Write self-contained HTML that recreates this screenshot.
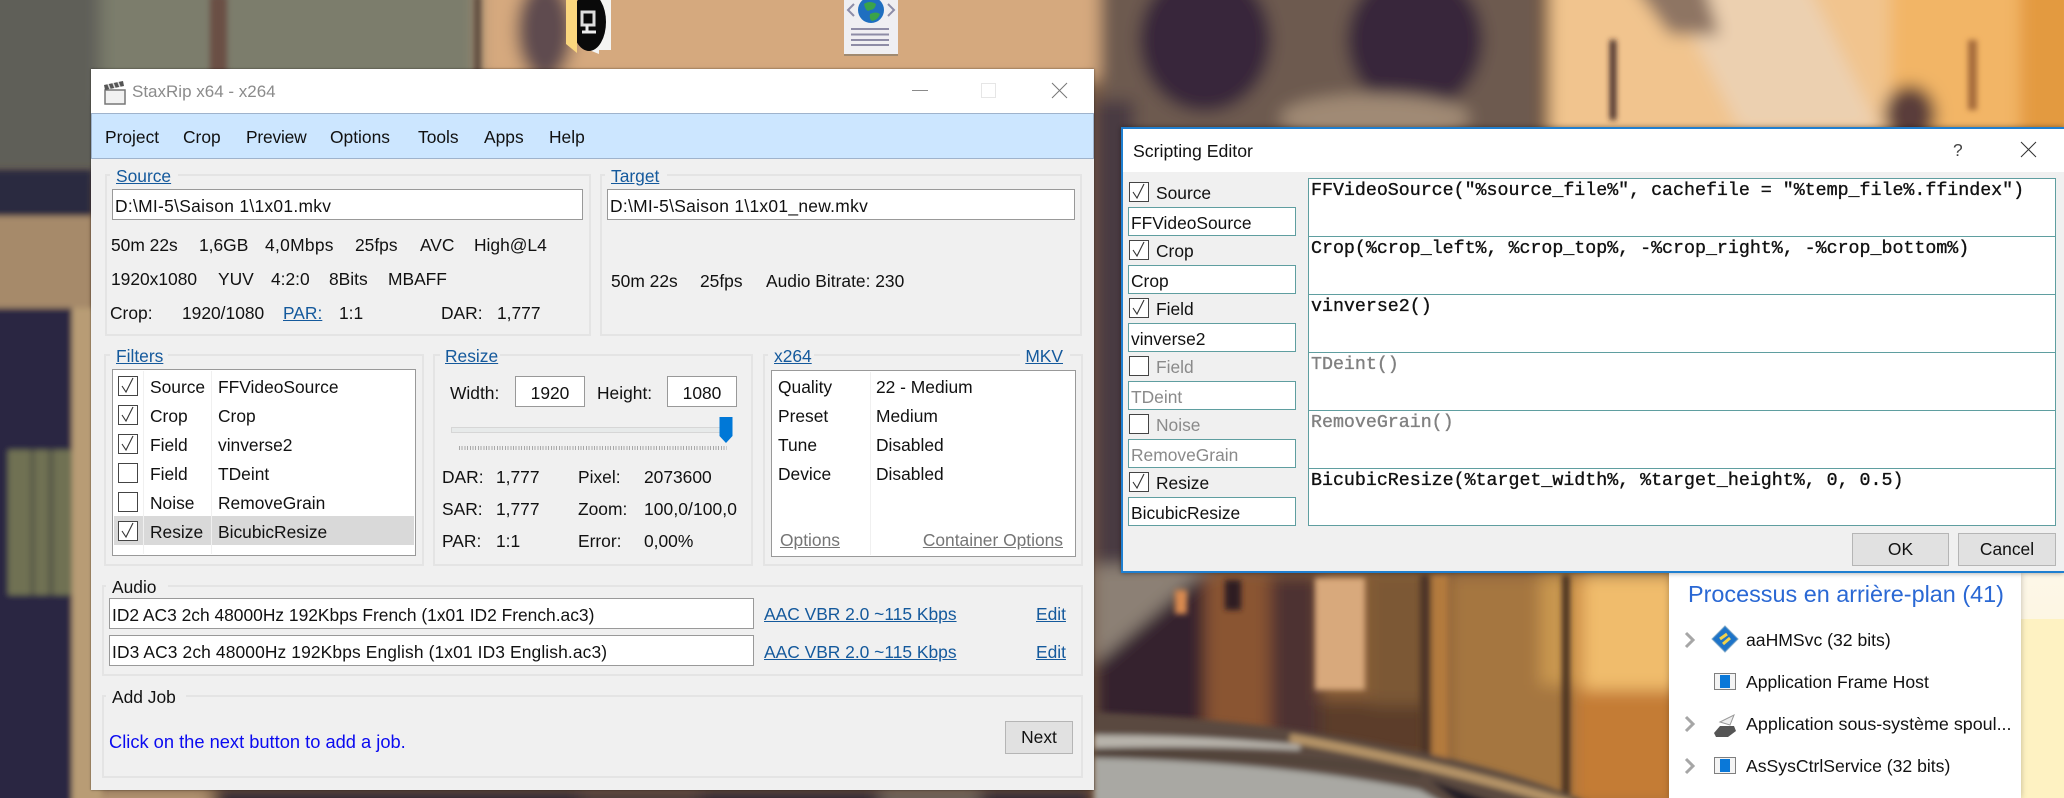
<!DOCTYPE html>
<html><head><meta charset="utf-8"><title>StaxRip</title>
<style>
html,body{margin:0;padding:0;width:2064px;height:798px;overflow:hidden;background:#7a5a40}
body{position:relative;font-family:"Liberation Sans",sans-serif;color:#111}
.a{position:absolute;box-sizing:border-box}
.t{position:absolute;white-space:nowrap;font-size:17.4px;line-height:20px;height:20px}
.s{letter-spacing:.3px}
.l{color:#14599c;text-decoration:underline}
.g{color:#757575;text-decoration:underline}
.d{color:#8a8a8a}
.i{position:absolute;box-sizing:border-box;background:#fff;border:1.5px solid #999}
.grp{position:absolute;box-sizing:border-box;border:2px solid #e4e4e4}
.leg{position:absolute;height:20px;background:#f0f0f0}
.cb{position:absolute;box-sizing:border-box;width:20px;height:20px;border:1.5px solid #444;background:#fff}
.cb svg{position:absolute;left:1px;top:0}
.e{position:absolute;box-sizing:border-box;left:1308px;width:748px;height:59.5px;background:#fff;border:1.5px solid #5f9ea0}
.m{position:absolute;white-space:nowrap;font-family:"Liberation Mono",monospace;font-size:18.3px;line-height:20px;-webkit-text-stroke:.35px currentColor}
.n{position:absolute;box-sizing:border-box;left:1128px;width:168px;height:29px;background:#fff;border:1.5px solid #5f9ea0}
.b{position:absolute;box-sizing:border-box;background:#e1e1e1;border:1.5px solid #b5b5b5;text-align:center;font-size:17.4px;line-height:31px}
</style></head><body>

<svg class="a" style="left:0;top:0" width="2064" height="798" viewBox="0 0 2064 798">
<defs>
<filter id="b1" x="-10%" y="-10%" width="120%" height="120%"><feGaussianBlur stdDeviation="8"/></filter>
<filter id="b2" x="-10%" y="-10%" width="120%" height="120%"><feGaussianBlur stdDeviation="3"/></filter>
</defs>
<g filter="url(#b1)">
<rect x="-30" y="-30" width="2124" height="860" fill="#7a5a40"/>
<rect x="-30" y="-30" width="140" height="205" fill="#5f5f59"/>
<rect x="100" y="-30" width="380" height="130" fill="#7c7d6c"/>
<rect x="480" y="-30" width="660" height="110" fill="#d5a97e"/>
<ellipse cx="545" cy="30" rx="28" ry="50" fill="#5e4c50"/>
<rect x="1100" y="-30" width="440" height="170" fill="#6d5a50"/>
<rect x="1094" y="100" width="40" height="480" fill="#4a3a42"/>
<ellipse cx="1205" cy="40" rx="66" ry="72" fill="#37263a"/>
<ellipse cx="1415" cy="40" rx="68" ry="72" fill="#37263a"/>
<ellipse cx="1375" cy="118" rx="95" ry="24" fill="#a08a74"/>
<rect x="1550" y="-30" width="540" height="170" fill="#f1c48e"/>
<polygon points="1660,-30 1800,-30 1880,130 1740,130" fill="#ecd0b0"/>
<polygon points="1622,-30 1700,-30 1720,35 1670,35" fill="#8e7464"/>
<rect x="1890" y="-30" width="180" height="170" fill="#f2b566"/>
<rect x="2020" y="-30" width="60" height="170" fill="#e39a40"/>
<ellipse cx="1910" cy="115" rx="26" ry="30" fill="#5a3c3a"/>
<rect x="1094" y="570" width="700" height="250" fill="#8a5f38"/>
<polygon points="1094,565 1215,565 1094,665" fill="#8c8074"/>
<polygon points="1094,665 1200,575 1240,575 1240,730 1094,730" fill="#36222e"/>
<rect x="1205" y="575" width="65" height="160" fill="#8a5530"/>
<rect x="1270" y="575" width="50" height="180" fill="#4e3230"/>
<rect x="1320" y="700" width="110" height="60" fill="#5c3d2c"/>
<rect x="1370" y="575" width="65" height="130" fill="#7b5836"/>
<rect x="1450" y="575" width="125" height="230" fill="#a5763f"/>
<rect x="1540" y="575" width="35" height="110" fill="#c9974f"/>
<rect x="1575" y="575" width="110" height="230" fill="#c47c36"/>
<rect x="1582" y="575" width="100" height="115" fill="#f0bc6c"/>
<rect x="91" y="790" width="120" height="30" fill="#b69874"/>
<rect x="215" y="788" width="880" height="30" fill="#2a2636"/>
<rect x="580" y="788" width="120" height="30" fill="#4a3a3a"/>
<rect x="880" y="788" width="100" height="30" fill="#6a6058"/>
</g>
<g filter="url(#b2)">
<rect x="-20" y="170" width="112" height="46" fill="#2a2a40"/>
<rect x="-20" y="216" width="112" height="92" fill="#a68a6b"/>
<rect x="-20" y="308" width="92" height="510" fill="#2a2843"/>
<rect x="72" y="308" width="30" height="510" fill="#b89c75"/>
<rect x="8" y="450" width="64" height="145" fill="#6f7152"/>
<rect x="30" y="450" width="5" height="145" fill="#5a5c48"/>
<rect x="48" y="450" width="6" height="145" fill="#5a5c48"/>
<rect x="210" y="-5" width="17" height="80" fill="#6a5044"/>
<rect x="474" y="-5" width="7" height="80" fill="#5c4a3c"/>
<rect x="1315" y="578" width="50" height="112" fill="#d8a97c"/>
<rect x="1432" y="575" width="16" height="190" fill="#b37a3c"/>
<rect x="1420" y="575" width="10" height="180" fill="#4d3428"/>
<rect x="1562" y="575" width="8" height="220" fill="#4a3024"/>
<rect x="1610" y="40" width="6" height="80" fill="#3a2420"/>
<rect x="1968" y="40" width="9" height="70" fill="#a56a3a"/>
<rect x="1175" y="590" width="12" height="24" fill="#d98a50"/>
<rect x="1225" y="580" width="16" height="30" fill="#2e1e24"/>
<path d="M1094 712 Q1280 722 1400 748 Q1520 772 1590 804 L1094 804Z" fill="#5a4a40"/>
<path d="M1094 735 Q1200 735 1300 745 L1300 750 Q1200 745 1094 748Z" fill="#b8b4ac"/>
<path d="M1290 738 Q1440 765 1570 804" fill="none" stroke="#b69468" stroke-width="9"/>
<path d="M1094 758 Q1280 762 1420 790 L1445 804 L1094 804Z" fill="#a9a8a3"/>
<path d="M1094 752 Q1300 755 1420 775" fill="none" stroke="#4d4038" stroke-width="5"/>
<path d="M1430 780 L1500 804 L1460 804Z" fill="#221c28"/>
</g>
</svg>

<!-- desktop icons -->
<svg class="a" style="left:560px;top:0" width="60" height="60" viewBox="0 0 60 60">
<polygon points="24,0 51,0 51,50 39,50 39,54 24,48" fill="#f4f4f2"/>
<ellipse cx="29" cy="22" rx="17" ry="29" fill="#0a0a0a"/>
<polygon points="6,0 17,0 17,53 6,44" fill="#fbd77e"/>
<rect x="22" y="12" width="12" height="13" fill="none" stroke="#ddd" stroke-width="3"/>
<path d="M22 32h14M27 25v8" stroke="#eee" stroke-width="3" fill="none"/>
</svg>
<svg class="a" style="left:844px;top:0" width="56" height="58" viewBox="0 0 56 58">
<rect x="0" y="0" width="54" height="55" fill="#efeff2"/>
<rect x="0" y="54" width="54" height="2" fill="#a08a70"/>
<circle cx="27" cy="10" r="13" fill="#1f6fc0"/>
<path d="M20 4q6-4 12 0q-1 6-6 6q-4 3-6-6zM26 14q6-3 10 0q-2 6-8 7q-3-2-2-7z" fill="#3aa34a"/>
<path d="M10 4l-6 6 6 6M44 4l6 6-6 6" fill="none" stroke="#8d8da8" stroke-width="2"/>
<path d="M7 29h38M7 34.500h38M7 40h38M7 45h38" stroke="#8d8ca6" stroke-width="2"/>
</svg>

<!-- task manager -->
<div class="a" style="left:2021px;top:573px;width:43px;height:225px;background:linear-gradient(#fdf7e8,#fdf6e3 46px,#fef2c2 46px,#fef2c2)"></div>
<div class="a" style="left:1669px;top:573px;width:352px;height:225px;background:#fff;box-shadow:0 0 6px rgba(0,0,0,.25)"></div>
<div class="t" style="left:1688px;top:582px;font-size:23.4px;line-height:24px;height:24px;color:#2a68d4">Processus en arrière-plan (41)</div>
<div class="t" style="left:1746px;top:630px;font-size:17.6px">aaHMSvc (32 bits)</div>
<div class="t" style="left:1746px;top:672px;font-size:17.6px">Application Frame Host</div>
<div class="t" style="left:1746px;top:714px;font-size:17.9px">Application sous-système spoul...</div>
<div class="t" style="left:1746px;top:756px;font-size:17.6px">AsSysCtrlService (32 bits)</div>
<svg class="a" style="left:1680px;top:625px" width="70" height="160" viewBox="0 0 70 160">
<path d="M6 8l7 7-7 7M6 92l7 7-7 7M6 134l7 7-7 7" fill="none" stroke="#a6a6a6" stroke-width="3"/>
<polygon points="45,1 58,14 45,27 32,14" fill="#1e74c8" stroke="#7aa6c8"/>
<path d="M40 14l7-5M43 19l7-6" stroke="#f2d24a" stroke-width="3"/>
<rect x="34.500" y="48.500" width="21" height="16" fill="#f4f4f4" stroke="#7f7f7f"/><rect x="40" y="50" width="10" height="13" fill="#0a78d8"/>
<rect x="34.500" y="132.500" width="21" height="16" fill="#f4f4f4" stroke="#7f7f7f"/><rect x="40" y="134" width="10" height="13" fill="#0a78d8"/>
<polygon points="40,97 54,90 50,100" fill="#eee" stroke="#999"/>
<path d="M34 108l6-7h14l2 5-8 6H36z" fill="#555"/>
</svg>

<!-- main window -->
<div class="a" style="left:91px;top:69px;width:1003px;height:721px;background:#f0f0f0;box-shadow:0 0 2px rgba(0,0,0,.55)"></div>
<div class="a" style="left:91px;top:69px;width:1003px;height:44px;background:#fff"></div>
<svg class="a" style="left:103px;top:80px" width="24" height="26" viewBox="0 0 24 26">
<rect x="2" y="10" width="20" height="14" fill="#f1f1f1" stroke="#777" stroke-width="1.500"/>
<polygon points="1,5 20,1 21,6 2,10" fill="#555"/>
<path d="M5 4l2 5M10 3l2 5M15 2l2 5" stroke="#ddd" stroke-width="1.500"/>
</svg>
<div class="t" style="left:132px;top:82px;font-size:17px;color:#8b8b8b">StaxRip x64 - x264</div>
<div class="a" style="left:912px;top:90px;width:16px;height:1px;background:#8a8a8a"></div>
<div class="a" style="left:981px;top:83px;width:15px;height:15px;border:1.500px solid #e6e6e6"></div>
<svg class="a" style="left:1051px;top:82px" width="17" height="17"><path d="M1 1l15 15M16 1L1 16" stroke="#777" stroke-width="1"/></svg>

<div class="a" style="left:91px;top:113px;width:1003px;height:46px;background:#cce6ff;border:1.500px solid #9fb3cc"></div>
<div class="t" style="left:105px;top:127px">Project</div>
<div class="t" style="left:183px;top:127px">Crop</div>
<div class="t" style="left:246px;top:127px;letter-spacing:-.2px">Preview</div>
<div class="t" style="left:330px;top:127px">Options</div>
<div class="t" style="left:418px;top:127px">Tools</div>
<div class="t" style="left:484px;top:127px">Apps</div>
<div class="t" style="left:549px;top:127px">Help</div>

<!-- source -->
<div class="grp" style="left:105px;top:174px;width:486px;height:162px"></div>
<div class="leg" style="left:110px;top:168px;width:68px"></div>
<div class="t l" style="left:116px;top:166px">Source</div>
<div class="grp" style="left:600px;top:174px;width:482px;height:162px"></div>
<div class="leg" style="left:605px;top:168px;width:62px"></div>
<div class="t l" style="left:611px;top:166px">Target</div>
<div class="i" style="left:112px;top:189px;width:471px;height:31px"></div>
<div class="t s" style="left:115px;top:196px">D:\MI-5\Saison 1\1x01.mkv</div>
<div class="i" style="left:607px;top:189px;width:468px;height:31px"></div>
<div class="t s" style="left:610px;top:196px">D:\MI-5\Saison 1\1x01_new.mkv</div>
<div class="t" style="left:111px;top:235px">50m 22s</div>
<div class="t" style="left:199px;top:235px">1,6GB</div>
<div class="t s" style="left:265px;top:235px">4,0Mbps</div>
<div class="t" style="left:355px;top:235px">25fps</div>
<div class="t" style="left:420px;top:235px">AVC</div>
<div class="t" style="left:474px;top:235px">High@L4</div>
<div class="t" style="left:111px;top:269px">1920x1080</div>
<div class="t" style="left:218px;top:269px">YUV</div>
<div class="t" style="left:271px;top:269px">4:2:0</div>
<div class="t" style="left:329px;top:269px">8Bits</div>
<div class="t" style="left:388px;top:269px">MBAFF</div>
<div class="t" style="left:110px;top:303px">Crop:</div>
<div class="t" style="left:182px;top:303px">1920/1080</div>
<div class="t l" style="left:283px;top:303px">PAR:</div>
<div class="t" style="left:339px;top:303px">1:1</div>
<div class="t" style="left:441px;top:303px">DAR:</div>
<div class="t" style="left:497px;top:303px">1,777</div>
<div class="t" style="left:611px;top:271px">50m 22s</div>
<div class="t" style="left:700px;top:271px">25fps</div>
<div class="t" style="left:766px;top:271px">Audio Bitrate: 230</div>

<!-- filters -->
<div class="grp" style="left:104px;top:354px;width:320px;height:212px"></div>
<div class="leg" style="left:110px;top:346px;width:58px"></div>
<div class="t l" style="left:116px;top:346px">Filters</div>
<div class="i" style="left:112px;top:369px;width:304px;height:187px"></div>
<div class="a" style="left:114px;top:516px;width:300px;height:29px;background:#d9d9d9"></div>
<div class="a" style="left:143px;top:371px;width:1px;height:183px;background:#f0f0f0"></div>
<div class="a" style="left:211px;top:371px;width:1px;height:183px;background:#f0f0f0"></div>
<div class="cb" style="left:118px;top:376px"><svg width="16" height="17"><path d="M2 9l4 6 7-14" fill="none" stroke="#333" stroke-width="1.100"/></svg></div>
<div class="cb" style="left:118px;top:405px"><svg width="16" height="17"><path d="M2 9l4 6 7-14" fill="none" stroke="#333" stroke-width="1.100"/></svg></div>
<div class="cb" style="left:118px;top:434px"><svg width="16" height="17"><path d="M2 9l4 6 7-14" fill="none" stroke="#333" stroke-width="1.100"/></svg></div>
<div class="cb" style="left:118px;top:463px"></div>
<div class="cb" style="left:118px;top:492px"></div>
<div class="cb" style="left:118px;top:521px"><svg width="16" height="17"><path d="M2 9l4 6 7-14" fill="none" stroke="#333" stroke-width="1.100"/></svg></div>
<div class="t" style="left:150px;top:377px">Source</div><div class="t" style="left:218px;top:377px">FFVideoSource</div>
<div class="t" style="left:150px;top:406px">Crop</div><div class="t" style="left:218px;top:406px">Crop</div>
<div class="t" style="left:150px;top:435px">Field</div><div class="t" style="left:218px;top:435px">vinverse2</div>
<div class="t" style="left:150px;top:464px">Field</div><div class="t" style="left:218px;top:464px">TDeint</div>
<div class="t" style="left:150px;top:493px">Noise</div><div class="t" style="left:218px;top:493px">RemoveGrain</div>
<div class="t" style="left:150px;top:522px">Resize</div><div class="t" style="left:218px;top:522px">BicubicResize</div>

<!-- resize -->
<div class="grp" style="left:433px;top:354px;width:320px;height:212px"></div>
<div class="leg" style="left:440px;top:346px;width:60px"></div>
<div class="t l" style="left:445px;top:346px">Resize</div>
<div class="t" style="left:450px;top:383px">Width:</div>
<div class="i" style="left:515px;top:376px;width:70px;height:31px"></div>
<div class="t" style="left:515px;top:383px;width:70px;text-align:center">1920</div>
<div class="t" style="left:597px;top:383px">Height:</div>
<div class="i" style="left:667px;top:376px;width:70px;height:31px"></div>
<div class="t" style="left:667px;top:383px;width:70px;text-align:center">1080</div>
<div class="a" style="left:451px;top:427px;width:274px;height:6px;background:#e7eaea;border:1px solid #d6d6d6"></div>
<svg class="a" style="left:719px;top:417px" width="15" height="27"><polygon points="0.500,0 13.500,0 13.500,19 7,26 0.500,19" fill="#0078d7"/></svg>
<div class="a" style="left:459px;top:446px;width:268px;height:4px;background:repeating-linear-gradient(90deg,#a8a8a8 0,#a8a8a8 1px,transparent 1px,transparent 2.700px)"></div>
<div class="t" style="left:442px;top:467px">DAR:</div><div class="t" style="left:496px;top:467px">1,777</div>
<div class="t" style="left:578px;top:467px">Pixel:</div><div class="t" style="left:644px;top:467px">2073600</div>
<div class="t" style="left:442px;top:499px">SAR:</div><div class="t" style="left:496px;top:499px">1,777</div>
<div class="t" style="left:578px;top:499px">Zoom:</div><div class="t" style="left:644px;top:499px;letter-spacing:.1px">100,0/100,0</div>
<div class="t" style="left:442px;top:531px">PAR:</div><div class="t" style="left:496px;top:531px">1:1</div>
<div class="t" style="left:578px;top:531px">Error:</div><div class="t" style="left:644px;top:531px">0,00%</div>

<!-- x264 -->
<div class="grp" style="left:763px;top:354px;width:320px;height:212px"></div>
<div class="leg" style="left:768px;top:346px;width:46px"></div>
<div class="leg" style="left:1020px;top:346px;width:50px"></div>
<div class="t l" style="left:774px;top:346px">x264</div>
<div class="t l" style="right:1001px;top:346px">MKV</div>
<div class="i" style="left:771px;top:370px;width:305px;height:187px"></div>
<div class="a" style="left:870px;top:372px;width:1px;height:183px;background:#f0f0f0"></div>
<div class="t" style="left:778px;top:377px">Quality</div><div class="t" style="left:876px;top:377px">22 - Medium</div>
<div class="t" style="left:778px;top:406px">Preset</div><div class="t" style="left:876px;top:406px">Medium</div>
<div class="t" style="left:778px;top:435px">Tune</div><div class="t" style="left:876px;top:435px">Disabled</div>
<div class="t" style="left:778px;top:464px">Device</div><div class="t" style="left:876px;top:464px">Disabled</div>
<div class="t g" style="left:780px;top:530px">Options</div>
<div class="t g" style="right:1001px;top:530px">Container Options</div>

<!-- audio -->
<div class="grp" style="left:102px;top:585px;width:981px;height:91px"></div>
<div class="leg" style="left:106px;top:577px;width:62px"></div>
<div class="t" style="left:112px;top:577px">Audio</div>
<div class="i" style="left:109px;top:598px;width:645px;height:31px"></div>
<div class="t" style="left:112px;top:605px">ID2 AC3 2ch 48000Hz 192Kbps French (1x01 ID2 French.ac3)</div>
<div class="i" style="left:109px;top:635px;width:645px;height:31px"></div>
<div class="t" style="left:112px;top:642px;letter-spacing:.12px">ID3 AC3 2ch 48000Hz 192Kbps English (1x01 ID3 English.ac3)</div>
<div class="t l" style="left:764px;top:604px">AAC VBR 2.0 ~115 Kbps</div>
<div class="t l" style="left:764px;top:642px">AAC VBR 2.0 ~115 Kbps</div>
<div class="t l" style="left:1036px;top:604px">Edit</div>
<div class="t l" style="left:1036px;top:642px">Edit</div>

<!-- add job -->
<div class="grp" style="left:102px;top:695px;width:981px;height:83px"></div>
<div class="leg" style="left:106px;top:687px;width:80px"></div>
<div class="t" style="left:112px;top:687px">Add Job</div>
<div class="t" style="left:109px;top:732px;color:#0a0af0;font-size:18.3px">Click on the next button to add a job.</div>
<div class="b" style="left:1005px;top:721px;width:68px;height:33px">Next</div>

<!-- scripting editor -->
<div class="a" style="left:1121px;top:127px;width:943px;height:446px;background:#f0f0f0;border:2px solid #1f7fd0;border-right:0;box-shadow:0 0 5px rgba(0,0,0,.4)"></div>
<div class="a" style="left:1123px;top:129px;width:941px;height:43px;background:#fff"></div>
<div class="t" style="left:1133px;top:141px;font-size:17.7px">Scripting Editor</div>
<div class="t" style="left:1953px;top:140px;color:#444">?</div>
<svg class="a" style="left:2020px;top:141px" width="17" height="17"><path d="M1 1l15 15M16 1L1 16" stroke="#333" stroke-width="1"/></svg>

<div class="cb" style="left:1129px;top:182px"><svg width="16" height="17"><path d="M2 9l4 6 7-14" fill="none" stroke="#333" stroke-width="1.100"/></svg></div>
<div class="t" style="left:1156px;top:183px">Source</div>
<div class="n" style="top:207px"></div><div class="t" style="left:1131px;top:213px">FFVideoSource</div>
<div class="cb" style="left:1129px;top:240px"><svg width="16" height="17"><path d="M2 9l4 6 7-14" fill="none" stroke="#333" stroke-width="1.100"/></svg></div>
<div class="t" style="left:1156px;top:241px">Crop</div>
<div class="n" style="top:265px"></div><div class="t" style="left:1131px;top:271px">Crop</div>
<div class="cb" style="left:1129px;top:298px"><svg width="16" height="17"><path d="M2 9l4 6 7-14" fill="none" stroke="#333" stroke-width="1.100"/></svg></div>
<div class="t" style="left:1156px;top:299px">Field</div>
<div class="n" style="top:323px"></div><div class="t" style="left:1131px;top:329px">vinverse2</div>
<div class="cb" style="left:1129px;top:356px"></div>
<div class="t d" style="left:1156px;top:357px">Field</div>
<div class="n" style="top:381px"></div><div class="t d" style="left:1131px;top:387px">TDeint</div>
<div class="cb" style="left:1129px;top:414px"></div>
<div class="t d" style="left:1156px;top:415px">Noise</div>
<div class="n" style="top:439px"></div><div class="t d" style="left:1131px;top:445px">RemoveGrain</div>
<div class="cb" style="left:1129px;top:472px"><svg width="16" height="17"><path d="M2 9l4 6 7-14" fill="none" stroke="#333" stroke-width="1.100"/></svg></div>
<div class="t" style="left:1156px;top:473px">Resize</div>
<div class="n" style="top:497px"></div><div class="t" style="left:1131px;top:503px">BicubicResize</div>

<div class="e" style="top:178px"></div>
<div class="e" style="top:236px"></div>
<div class="e" style="top:294px"></div>
<div class="e" style="top:352px"></div>
<div class="e" style="top:410px"></div>
<div class="e" style="top:468px;height:58px"></div>
<div class="m" style="left:1311px;top:181px">FFVideoSource("%source_file%", cachefile = "%temp_file%.ffindex")</div>
<div class="m" style="left:1311px;top:239px">Crop(%crop_left%, %crop_top%, -%crop_right%, -%crop_bottom%)</div>
<div class="m" style="left:1311px;top:297px">vinverse2()</div>
<div class="m" style="left:1311px;top:355px;color:#808080">TDeint()</div>
<div class="m" style="left:1311px;top:413px;color:#808080">RemoveGrain()</div>
<div class="m" style="left:1311px;top:471px">BicubicResize(%target_width%, %target_height%, 0, 0.5)</div>
<div class="b" style="left:1852px;top:533px;width:97px;height:33px">OK</div>
<div class="b" style="left:1958px;top:533px;width:98px;height:33px">Cancel</div>
</body></html>
